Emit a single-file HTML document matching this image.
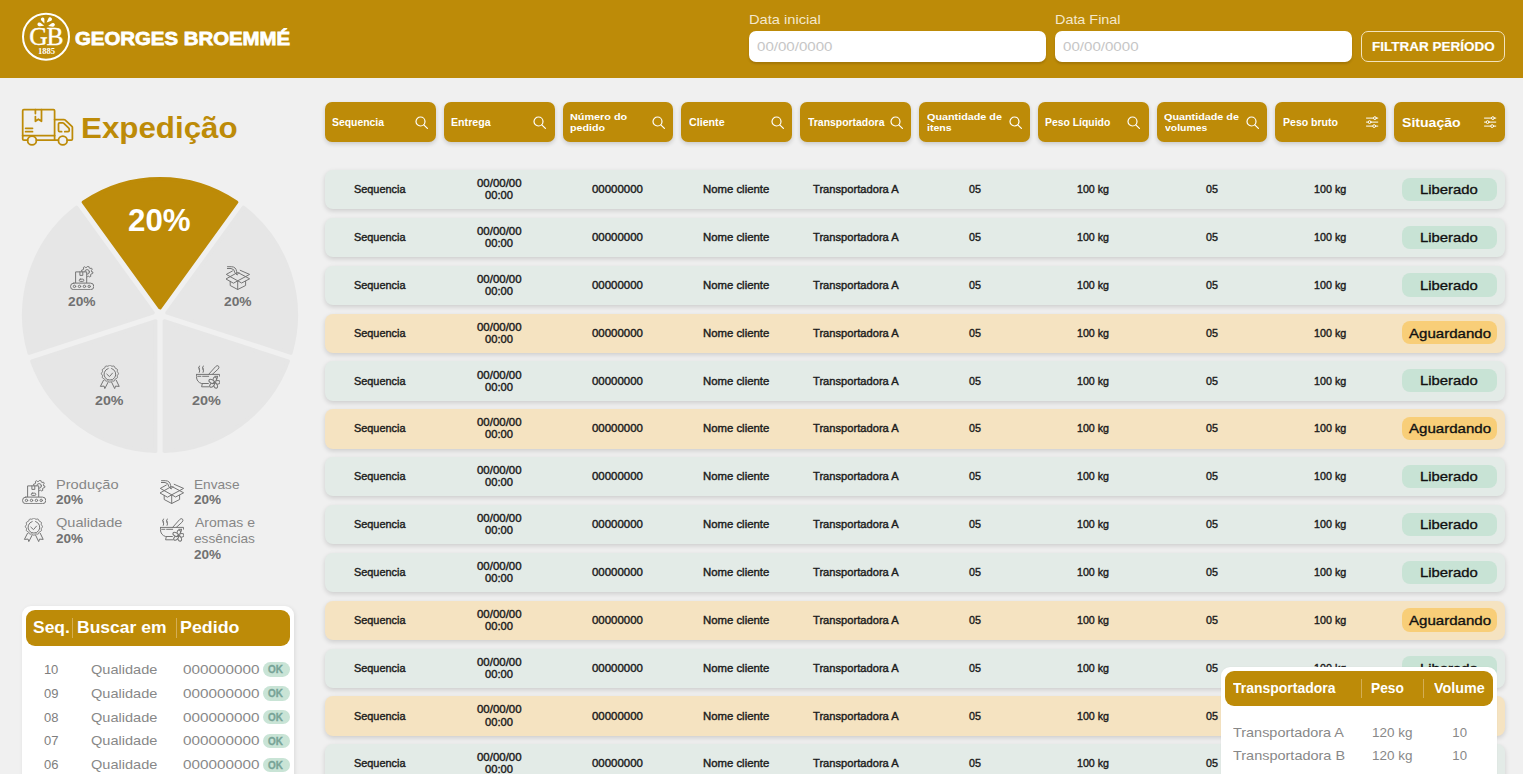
<!DOCTYPE html>
<html><head><meta charset="utf-8"><title>Expedição</title><style>
*{margin:0;padding:0}
html,body{width:1523px;height:774px;overflow:hidden;background:#F0F0F0;font-family:"Liberation Sans",sans-serif;position:relative}
.t{position:absolute;line-height:0;white-space:nowrap;transform-origin:0 0}
.r{position:absolute}
</style></head>
<body>
<div class="r" style="left:0px;top:0px;width:1523px;height:78px;background:#BD8B08;"></div>
<svg class="r" style="left:20px;top:11px" width="54" height="52" viewBox="0 0 54 52">
<circle cx="26" cy="25.7" r="23" fill="none" stroke="#fff" stroke-width="2"/>
<g fill="#fff">
<path d="M24.40 12.40 L21.40 9.57 A1.75 1.75 0 1 1 24.35 8.28 Z"/>
<path d="M26.60 11.40 L28.36 7.43 A1.9 1.9 0 1 1 30.71 10.00 Z"/>
<path d="M24.20 14.70 L19.47 15.14 A1.85 1.85 0 1 1 20.42 11.83 Z"/>
<path d="M28.10 15.10 L31.79 12.32 A1.85 1.85 0 1 1 32.68 15.64 Z"/>
</g>
<text x="25.7" y="33.9" text-anchor="middle" font-family="Liberation Serif" font-size="25.5" fill="#fff" stroke="#fff" stroke-width="0.35" letter-spacing="-1.2">GB</text>
<text x="26.5" y="43.2" text-anchor="middle" font-family="Liberation Serif" font-size="8.6" font-weight="700" fill="#fff">1885</text>
</svg>
<div class="t" style="left:74.87px;top:39.20px;font-size:19.2px;font-weight:700;color:#fff;transform:scaleX(1.0622);-webkit-text-stroke:0.8px #fff;">GEORGES BROEMMÉ</div>
<div class="t" style="left:748.89px;top:20.30px;font-size:13.5px;font-weight:400;color:#F4E8CC;transform:scaleX(1.0872);">Data inicial</div>
<div class="t" style="left:1054.91px;top:20.20px;font-size:13.5px;font-weight:400;color:#F4E8CC;transform:scaleX(1.0650);">Data Final</div>
<div class="r" style="left:749px;top:31px;width:297px;height:31px;background:#fff;border-radius:7px;box-shadow:0 2px 2px rgba(90,60,0,0.25);"></div>
<div class="t" style="left:756.71px;top:46.90px;font-size:12.7px;font-weight:400;color:#C6C6C6;transform:scaleX(1.1883);">00/00/0000</div>
<div class="r" style="left:1055px;top:31px;width:297px;height:31px;background:#fff;border-radius:7px;box-shadow:0 2px 2px rgba(90,60,0,0.25);"></div>
<div class="t" style="left:1063.11px;top:46.90px;font-size:12.7px;font-weight:400;color:#C6C6C6;transform:scaleX(1.1899);">00/00/0000</div>
<div class="r" style="left:1361.3px;top:31px;width:143.9px;height:31px;border:1px solid #F3E3BD;border-radius:7px;box-sizing:border-box;"></div>
<div class="t" style="left:1371.82px;top:47.20px;font-size:12.9px;font-weight:700;color:#fff;transform:scaleX(1.0462);-webkit-text-stroke:0.15px #fff;">FILTRAR PERÍODO</div>
<svg class="r" style="left:18px;top:105px" width="60" height="45" viewBox="0 0 60 45" fill="none" stroke="#BD8B08" stroke-width="1.75" stroke-linejoin="round" stroke-linecap="round">
<path d="M4.7 30.5 V5.8 Q4.7 4.7 5.8 4.7 H35.5 Q36.6 4.7 36.6 5.8 V35.2"/>
<path d="M17.4 4.7 V8.6 M17.4 11.6 V16.3 L20.4 14.2 L23.5 16.3 V4.7"/>
<path d="M7.6 23.3 H14.5 M7.6 26.7 H14.5"/>
<path d="M4.7 30.5 H36.6"/>
<path d="M4.7 30.5 V34 Q4.7 35.2 5.9 35.2 H9.6 M18.4 35.2 H40.4 M49.2 35.2 H53.3 Q54.4 35.2 54.4 34 V22.6 Q54.4 21.9 53.9 21.4 L47 14.9 Q46.6 14.6 46 14.6 H36.6"/>
<path d="M43.6 26.7 H41.6 Q40.5 26.7 40.5 25.6 V18.9 Q40.5 17.8 41.6 17.8 H44.6 Q45.2 17.8 45.6 18.2 L50.8 23.2 Q51.2 23.6 51.2 24.2 V25.6 Q51.2 26.7 50.1 26.7 H46.8"/>
<circle cx="14" cy="35.5" r="4.4"/><circle cx="44.8" cy="35.5" r="4.4"/>
</svg>
<div class="t" style="left:80.70px;top:127.80px;font-size:29px;font-weight:700;color:#BD8B08;transform:scaleX(1.0800);">Expedição</div>
<svg width="0" height="0" style="position:absolute">
<defs>
<symbol id="i-prod" viewBox="0 0 24 24" fill="none" stroke="currentColor" stroke-width="1.0" stroke-linejoin="round" stroke-linecap="round">
<path d="M22.87 6.47 L22.65 7.58 L21.07 8.02 L20.58 8.75 L20.78 10.38 L19.83 11.02 L18.41 10.21 L17.54 10.38 L16.53 11.67 L15.42 11.45 L14.98 9.87 L14.25 9.38 L12.62 9.58 L11.98 8.63 L12.79 7.21 L12.62 6.34 L11.33 5.33 L11.55 4.22 L13.13 3.78 L13.62 3.05 L13.42 1.42 L14.37 0.78 L15.79 1.59 L16.66 1.42 L17.67 0.13 L18.78 0.35 L19.22 1.93 L19.95 2.42 L21.58 2.22 L22.22 3.17 L21.41 4.59 L21.58 5.46 Z" style="fill:var(--ibg)"/>
<circle cx="17.1" cy="5.9" r="2.3"/>
<path d="M5.6 17.1 V5.9 H16.7 V17.1 Z" style="fill:var(--ibg)"/>
<path d="M9.9 5.9 V9.4 H12.8 V5.9"/>
<rect x="9.3" y="13.15" width="4.5" height="2.25" rx="1"/>
<rect x="0.5" y="17.1" width="23.3" height="6.6" rx="3.3" style="fill:var(--ibg)"/>
<circle cx="4.5" cy="20.4" r="1.2"/><circle cx="9.5" cy="20.4" r="1.2"/><circle cx="14.45" cy="20.4" r="1.2"/><circle cx="19.2" cy="20.4" r="1.2"/>
</symbol>
<symbol id="i-env" viewBox="0 0 24 24" fill="none" stroke="currentColor" stroke-width="1.0" stroke-linejoin="round" stroke-linecap="round">
<path d="M4.2 15.3 V19.5 L11.7 23.5 L19.6 19.5 V15.3"/>
<path d="M11.7 14.8 V23.5"/>
<path d="M0.3 12.8 L4.2 10.6 L11.7 14.8 L19.6 10.6 L23.6 12.8 L15.6 17 L11.7 14.8 L7.8 17 Z"/>
<path d="M4.2 10.6 L0.3 8.4 L6.4 5 M14.2 4.3 L23.6 8.4 L19.6 10.6"/>
<path d="M4.2 10.6 L11.7 6.4 L19.6 10.6"/>
<path d="M1.5 0.7 H5.6 Q10 0.9 10.6 5.5 L11 8.8 L12.9 6.7 M11 8.8 L9.1 7 M1.4 2.5 H5 Q8.4 2.7 8.9 6.4"/>
</symbol>
<symbol id="i-qual" viewBox="0 0 24 24" fill="none" stroke="currentColor" stroke-width="1.0" stroke-linejoin="round" stroke-linecap="round">
<path d="M5.45 15.4 L2.4 21.4 L6.1 21.1 L6.8 23.6 L10.1 17.2"/>
<path d="M18.3 15.4 L21.2 21.4 L17.5 21.1 L16.7 23.6 L13.6 17.2"/>
<path d="M11.90 0.05 L12.45 0.20 L12.96 0.57 L13.42 0.97 L13.88 1.21 L14.40 1.23 L15.00 1.12 L15.62 1.05 L16.17 1.20 L16.58 1.60 L16.83 2.17 L17.03 2.75 L17.31 3.19 L17.75 3.47 L18.33 3.67 L18.90 3.92 L19.30 4.32 L19.45 4.88 L19.38 5.50 L19.27 6.10 L19.29 6.62 L19.53 7.08 L19.93 7.54 L20.30 8.05 L20.45 8.60 L20.30 9.15 L19.93 9.66 L19.53 10.12 L19.29 10.58 L19.27 11.10 L19.38 11.70 L19.45 12.32 L19.30 12.87 L18.90 13.28 L18.33 13.53 L17.75 13.73 L17.31 14.01 L17.03 14.45 L16.83 15.03 L16.58 15.60 L16.17 16.00 L15.62 16.15 L15.00 16.08 L14.40 15.97 L13.88 15.99 L13.42 16.23 L12.96 16.63 L12.45 17.00 L11.90 17.15 L11.35 17.00 L10.84 16.63 L10.38 16.23 L9.92 15.99 L9.40 15.97 L8.80 16.08 L8.18 16.15 L7.63 16.00 L7.22 15.60 L6.97 15.03 L6.77 14.45 L6.49 14.01 L6.05 13.73 L5.47 13.53 L4.90 13.28 L4.50 12.88 L4.35 12.32 L4.42 11.70 L4.53 11.10 L4.51 10.58 L4.27 10.12 L3.87 9.66 L3.50 9.15 L3.35 8.60 L3.50 8.05 L3.87 7.54 L4.27 7.08 L4.51 6.62 L4.53 6.10 L4.42 5.50 L4.35 4.88 L4.50 4.32 L4.90 3.92 L5.47 3.67 L6.05 3.47 L6.49 3.19 L6.77 2.75 L6.97 2.17 L7.22 1.60 L7.62 1.20 L8.18 1.05 L8.80 1.12 L9.40 1.23 L9.92 1.21 L10.38 0.97 L10.84 0.57 L11.35 0.20 Z" style="fill:var(--ibg)"/>
<path d="M10.2 3.5 A5.9 5.9 0 1 0 13.6 3.5"/>
<path d="M8.8 9.1 L11.5 11.6 L14.5 8.1"/>
</symbol>
<symbol id="i-aro" viewBox="0 0 24 24" fill="none" stroke="currentColor" stroke-width="1.0" stroke-linejoin="round" stroke-linecap="round">
<path d="M12.6 9.4 L19.5 1.7 Q21.2 -0.3 22.6 1.2 Q23.6 2.7 21.9 4.3 L16.3 9.4"/>
<path d="M0.4 9.4 H23.6 V11.2 M0.4 9.4 V11.5 Q0.7 17.2 5.6 18.5 H12.4"/>
<path d="M1.7 11.3 H4.9 M6.6 11.3 H12.7 M18.8 11.3 H21.5 M21.6 11.3 Q21.4 13.8 20.5 15"/>
<path d="M6.3 18.6 L5.6 21.8 H13"/>
<path d="M3.4 1 Q2.2 2.7 3.4 4.6 Q4.1 5.8 3.3 7.4 M7.2 1 Q6 2.7 7.2 4.6 Q7.9 5.8 7.1 7.4 M2.6 2.6 Q4 3.3 3.4 4.6 M6.4 2.6 Q7.8 3.3 7.2 4.6"/>
<g style="fill:var(--ibg)"><ellipse cx="18.70" cy="14.94" rx="1.75" ry="2.9" transform="rotate(10 18.70 14.94)"/><ellipse cx="21.07" cy="17.40" rx="1.75" ry="2.9" transform="rotate(82 21.07 17.40)"/><ellipse cx="19.47" cy="20.41" rx="1.75" ry="2.9" transform="rotate(154 19.47 20.41)"/><ellipse cx="16.11" cy="19.81" rx="1.75" ry="2.9" transform="rotate(226 16.11 19.81)"/><ellipse cx="15.64" cy="16.44" rx="1.75" ry="2.9" transform="rotate(298 15.64 16.44)"/></g>
<circle cx="18.2" cy="17.8" r="0.9"/>
</symbol>
</defs></svg>
<svg class="r" style="left:0;top:0" width="330" height="470" viewBox="0 0 330 470">
<path d="M160.00 307.60 L83.50 202.31 A136.20 136.20 0 0 1 236.50 202.31 Z" fill="#BD8B08" stroke="#BD8B08" stroke-width="3.6" stroke-linejoin="round"/>
<path d="M167.04 312.71 L243.53 207.42 A136.20 136.20 0 0 1 290.81 352.93 Z" fill="#E6E6E6" stroke="#E6E6E6" stroke-width="3.6" stroke-linejoin="round"/>
<path d="M164.35 320.99 L288.12 361.20 A136.20 136.20 0 0 1 164.35 451.13 Z" fill="#E6E6E6" stroke="#E6E6E6" stroke-width="3.6" stroke-linejoin="round"/>
<path d="M155.65 320.99 L155.65 451.13 A136.20 136.20 0 0 1 31.88 361.20 Z" fill="#E6E6E6" stroke="#E6E6E6" stroke-width="3.6" stroke-linejoin="round"/>
<path d="M152.96 312.71 L29.19 352.93 A136.20 136.20 0 0 1 76.47 207.42 Z" fill="#E6E6E6" stroke="#E6E6E6" stroke-width="3.6" stroke-linejoin="round"/>
</svg>
<div class="t" style="left:128.46px;top:220.00px;font-size:30.5px;font-weight:700;color:#fff;transform:scaleX(1.0256);">20%</div>
<svg class="r" style="left:69.8px;top:266px;color:#757575;--ibg:#E6E6E6" width="24" height="24" viewBox="0 0 24 24"><use href="#i-prod"/></svg>
<div class="t" style="left:67.79px;top:302.30px;font-size:13.5px;font-weight:700;color:#717171;transform:scaleX(1.0212);">20%</div>
<svg class="r" style="left:226px;top:266px;color:#757575;--ibg:#E6E6E6" width="24" height="24" viewBox="0 0 24 24"><use href="#i-env"/></svg>
<div class="t" style="left:223.79px;top:302.30px;font-size:13.5px;font-weight:700;color:#717171;transform:scaleX(1.0212);">20%</div>
<svg class="r" style="left:98px;top:364.5px;color:#757575;--ibg:#E6E6E6" width="24" height="24" viewBox="0 0 24 24"><use href="#i-qual"/></svg>
<div class="t" style="left:95.17px;top:401.00px;font-size:13.5px;font-weight:700;color:#717171;transform:scaleX(1.0556);">20%</div>
<svg class="r" style="left:195.5px;top:364.5px;color:#757575;--ibg:#E6E6E6" width="24" height="24" viewBox="0 0 24 24"><use href="#i-aro"/></svg>
<div class="t" style="left:192.47px;top:401.00px;font-size:13.5px;font-weight:700;color:#717171;transform:scaleX(1.0709);">20%</div>
<svg class="r" style="left:22px;top:480px;color:#757575;--ibg:#F0F0F0" width="24" height="24" viewBox="0 0 24 24"><use href="#i-prod"/></svg>
<div class="t" style="left:55.68px;top:485.00px;font-size:13.1px;font-weight:400;color:#878787;transform:scaleX(1.1168);">Produção</div>
<div class="t" style="left:56.19px;top:500.00px;font-size:13.3px;font-weight:700;color:#717171;transform:scaleX(1.0195);">20%</div>
<svg class="r" style="left:160px;top:480px;color:#757575;--ibg:#F0F0F0" width="24" height="24" viewBox="0 0 24 24"><use href="#i-env"/></svg>
<div class="t" style="left:193.85px;top:485.00px;font-size:13.1px;font-weight:400;color:#878787;transform:scaleX(1.0429);">Envase</div>
<div class="t" style="left:194.29px;top:500.00px;font-size:13.3px;font-weight:700;color:#717171;transform:scaleX(1.0195);">20%</div>
<svg class="r" style="left:22px;top:518px;color:#757575;--ibg:#F0F0F0" width="24" height="24" viewBox="0 0 24 24"><use href="#i-qual"/></svg>
<div class="t" style="left:55.96px;top:523.20px;font-size:13.1px;font-weight:400;color:#878787;transform:scaleX(1.1120);">Qualidade</div>
<div class="t" style="left:56.19px;top:539.00px;font-size:13.3px;font-weight:700;color:#717171;transform:scaleX(1.0195);">20%</div>
<svg class="r" style="left:160px;top:518px;color:#757575;--ibg:#F0F0F0" width="24" height="24" viewBox="0 0 24 24"><use href="#i-aro"/></svg>
<div class="t" style="left:194.84px;top:523.20px;font-size:13.1px;font-weight:400;color:#878787;transform:scaleX(1.0713);">Aromas e</div>
<div class="t" style="left:194.14px;top:539.00px;font-size:13.1px;font-weight:400;color:#878787;transform:scaleX(1.0463);">essências</div>
<div class="t" style="left:194.29px;top:554.80px;font-size:13.3px;font-weight:700;color:#717171;transform:scaleX(1.0195);">20%</div>
<div class="r" style="left:22px;top:606px;width:272px;height:200px;background:#fff;border-radius:9px;box-shadow:1px 1px 4px rgba(0,0,0,0.09);"></div>
<div class="r" style="left:26px;top:610px;width:264px;height:35.5px;background:#BD8B08;border-radius:9px;"></div>
<div class="r" style="left:72.2px;top:618px;width:1px;height:19.5px;background:#D4AE55;"></div>
<div class="r" style="left:176px;top:618px;width:1px;height:19.5px;background:#D4AE55;"></div>
<div class="t" style="left:33.24px;top:627.30px;font-size:16.5px;font-weight:700;color:#fff;transform:scaleX(1.0589);">Seq.</div>
<div class="t" style="left:76.81px;top:627.30px;font-size:16.5px;font-weight:700;color:#fff;transform:scaleX(1.0613);">Buscar em</div>
<div class="t" style="left:180.19px;top:627.30px;font-size:16.5px;font-weight:700;color:#fff;transform:scaleX(1.0809);">Pedido</div>
<div class="t" style="left:43.88px;top:669.70px;font-size:13px;font-weight:400;color:#7E7E7E;">10</div>
<div class="t" style="left:91.36px;top:669.70px;font-size:13px;font-weight:400;color:#888888;transform:scaleX(1.1188);">Qualidade</div>
<div class="t" style="left:183.32px;top:669.70px;font-size:13px;font-weight:400;color:#888888;transform:scaleX(1.1748);">000000000</div>
<div class="r" style="left:263px;top:661.9px;width:26.6px;height:14.8px;background:#C9E4D6;border-radius:7.4px;"></div>
<div class="t" style="left:268.35px;top:670.10px;font-size:10.3px;font-weight:700;color:#77A396;transform:scaleX(0.9628);-webkit-text-stroke:0.3px #77A396;">OK</div>
<div class="t" style="left:44.06px;top:693.60px;font-size:13px;font-weight:400;color:#7E7E7E;">09</div>
<div class="t" style="left:91.36px;top:693.60px;font-size:13px;font-weight:400;color:#888888;transform:scaleX(1.1188);">Qualidade</div>
<div class="t" style="left:183.32px;top:693.60px;font-size:13px;font-weight:400;color:#888888;transform:scaleX(1.1748);">000000000</div>
<div class="r" style="left:263px;top:685.8px;width:26.6px;height:14.8px;background:#C9E4D6;border-radius:7.4px;"></div>
<div class="t" style="left:268.35px;top:694.00px;font-size:10.3px;font-weight:700;color:#77A396;transform:scaleX(0.9628);-webkit-text-stroke:0.3px #77A396;">OK</div>
<div class="t" style="left:44.05px;top:717.50px;font-size:13px;font-weight:400;color:#7E7E7E;">08</div>
<div class="t" style="left:91.36px;top:717.50px;font-size:13px;font-weight:400;color:#888888;transform:scaleX(1.1188);">Qualidade</div>
<div class="t" style="left:183.32px;top:717.50px;font-size:13px;font-weight:400;color:#888888;transform:scaleX(1.1748);">000000000</div>
<div class="r" style="left:263px;top:709.7px;width:26.6px;height:14.8px;background:#C9E4D6;border-radius:7.4px;"></div>
<div class="t" style="left:268.35px;top:717.90px;font-size:10.3px;font-weight:700;color:#77A396;transform:scaleX(0.9628);-webkit-text-stroke:0.3px #77A396;">OK</div>
<div class="t" style="left:44.06px;top:741.40px;font-size:13px;font-weight:400;color:#7E7E7E;">07</div>
<div class="t" style="left:91.36px;top:741.40px;font-size:13px;font-weight:400;color:#888888;transform:scaleX(1.1188);">Qualidade</div>
<div class="t" style="left:183.32px;top:741.40px;font-size:13px;font-weight:400;color:#888888;transform:scaleX(1.1748);">000000000</div>
<div class="r" style="left:263px;top:733.6px;width:26.6px;height:14.8px;background:#C9E4D6;border-radius:7.4px;"></div>
<div class="t" style="left:268.35px;top:741.80px;font-size:10.3px;font-weight:700;color:#77A396;transform:scaleX(0.9628);-webkit-text-stroke:0.3px #77A396;">OK</div>
<div class="t" style="left:44.06px;top:765.30px;font-size:13px;font-weight:400;color:#7E7E7E;">06</div>
<div class="t" style="left:91.36px;top:765.30px;font-size:13px;font-weight:400;color:#888888;transform:scaleX(1.1188);">Qualidade</div>
<div class="t" style="left:183.32px;top:765.30px;font-size:13px;font-weight:400;color:#888888;transform:scaleX(1.1748);">000000000</div>
<div class="r" style="left:263px;top:757.5px;width:26.6px;height:14.8px;background:#C9E4D6;border-radius:7.4px;"></div>
<div class="t" style="left:268.35px;top:765.70px;font-size:10.3px;font-weight:700;color:#77A396;transform:scaleX(0.9628);-webkit-text-stroke:0.3px #77A396;">OK</div>
<div class="r" style="left:325.0px;top:102px;width:110.8px;height:40px;background:#BD8B08;border-radius:7px;box-shadow:0 2px 4px rgba(0,0,0,0.16);"></div>
<div class="t" style="left:332.49px;top:122.30px;font-size:10.9px;font-weight:700;color:#fff;transform:scaleX(0.9542);">Sequencia</div>
<svg class="r" style="left:414.5px;top:115.6px" width="14" height="14" viewBox="0 0 14 14" fill="none" stroke="#fff" stroke-width="1.2" stroke-linecap="round"><circle cx="5.5" cy="5.5" r="4.5"/><path d="M8.8 8.8 L12.4 12.4"/></svg>
<div class="r" style="left:443.8px;top:102px;width:110.8px;height:40px;background:#BD8B08;border-radius:7px;box-shadow:0 2px 4px rgba(0,0,0,0.16);"></div>
<div class="t" style="left:451.18px;top:122.30px;font-size:10.9px;font-weight:700;color:#fff;transform:scaleX(0.9778);">Entrega</div>
<svg class="r" style="left:533.3px;top:115.6px" width="14" height="14" viewBox="0 0 14 14" fill="none" stroke="#fff" stroke-width="1.2" stroke-linecap="round"><circle cx="5.5" cy="5.5" r="4.5"/><path d="M8.8 8.8 L12.4 12.4"/></svg>
<div class="r" style="left:562.6px;top:102px;width:110.8px;height:40px;background:#BD8B08;border-radius:7px;box-shadow:0 2px 4px rgba(0,0,0,0.16);"></div>
<div class="t" style="left:570.26px;top:116.60px;font-size:9.6px;font-weight:700;color:#fff;transform:scaleX(1.1276);">Número do</div>
<div class="t" style="left:570.26px;top:128.40px;font-size:9.6px;font-weight:700;color:#fff;transform:scaleX(1.1123);">pedido</div>
<svg class="r" style="left:652.1px;top:115.6px" width="14" height="14" viewBox="0 0 14 14" fill="none" stroke="#fff" stroke-width="1.2" stroke-linecap="round"><circle cx="5.5" cy="5.5" r="4.5"/><path d="M8.8 8.8 L12.4 12.4"/></svg>
<div class="r" style="left:681.4px;top:102px;width:110.8px;height:40px;background:#BD8B08;border-radius:7px;box-shadow:0 2px 4px rgba(0,0,0,0.16);"></div>
<div class="t" style="left:689.00px;top:122.30px;font-size:10.9px;font-weight:700;color:#fff;transform:scaleX(0.9801);">Cliente</div>
<svg class="r" style="left:770.9px;top:115.6px" width="14" height="14" viewBox="0 0 14 14" fill="none" stroke="#fff" stroke-width="1.2" stroke-linecap="round"><circle cx="5.5" cy="5.5" r="4.5"/><path d="M8.8 8.8 L12.4 12.4"/></svg>
<div class="r" style="left:800.2px;top:102px;width:110.8px;height:40px;background:#BD8B08;border-radius:7px;box-shadow:0 2px 4px rgba(0,0,0,0.16);"></div>
<div class="t" style="left:808.46px;top:122.30px;font-size:10.9px;font-weight:700;color:#fff;transform:scaleX(0.9567);">Transportadora</div>
<svg class="r" style="left:889.7px;top:115.6px" width="14" height="14" viewBox="0 0 14 14" fill="none" stroke="#fff" stroke-width="1.2" stroke-linecap="round"><circle cx="5.5" cy="5.5" r="4.5"/><path d="M8.8 8.8 L12.4 12.4"/></svg>
<div class="r" style="left:919.0px;top:102px;width:110.8px;height:40px;background:#BD8B08;border-radius:7px;box-shadow:0 2px 4px rgba(0,0,0,0.16);"></div>
<div class="t" style="left:926.86px;top:116.60px;font-size:9.6px;font-weight:700;color:#fff;transform:scaleX(1.1239);">Quantidade de</div>
<div class="t" style="left:926.65px;top:128.40px;font-size:9.6px;font-weight:700;color:#fff;transform:scaleX(1.1012);">itens</div>
<svg class="r" style="left:1008.5px;top:115.6px" width="14" height="14" viewBox="0 0 14 14" fill="none" stroke="#fff" stroke-width="1.2" stroke-linecap="round"><circle cx="5.5" cy="5.5" r="4.5"/><path d="M8.8 8.8 L12.4 12.4"/></svg>
<div class="r" style="left:1037.8px;top:102px;width:110.8px;height:40px;background:#BD8B08;border-radius:7px;box-shadow:0 2px 4px rgba(0,0,0,0.16);"></div>
<div class="t" style="left:1045.30px;top:122.30px;font-size:10.9px;font-weight:700;color:#fff;transform:scaleX(0.9542);">Peso Líquido</div>
<svg class="r" style="left:1127.3px;top:115.6px" width="14" height="14" viewBox="0 0 14 14" fill="none" stroke="#fff" stroke-width="1.2" stroke-linecap="round"><circle cx="5.5" cy="5.5" r="4.5"/><path d="M8.8 8.8 L12.4 12.4"/></svg>
<div class="r" style="left:1156.6px;top:102px;width:110.8px;height:40px;background:#BD8B08;border-radius:7px;box-shadow:0 2px 4px rgba(0,0,0,0.16);"></div>
<div class="t" style="left:1164.46px;top:116.60px;font-size:9.6px;font-weight:700;color:#fff;transform:scaleX(1.1239);">Quantidade de</div>
<div class="t" style="left:1165.04px;top:128.40px;font-size:9.6px;font-weight:700;color:#fff;transform:scaleX(1.0853);">volumes</div>
<svg class="r" style="left:1246.1px;top:115.6px" width="14" height="14" viewBox="0 0 14 14" fill="none" stroke="#fff" stroke-width="1.2" stroke-linecap="round"><circle cx="5.5" cy="5.5" r="4.5"/><path d="M8.8 8.8 L12.4 12.4"/></svg>
<div class="r" style="left:1275.4px;top:102px;width:110.8px;height:40px;background:#BD8B08;border-radius:7px;box-shadow:0 2px 4px rgba(0,0,0,0.16);"></div>
<div class="t" style="left:1282.99px;top:122.30px;font-size:10.9px;font-weight:700;color:#fff;transform:scaleX(0.9668);">Peso bruto</div>
<svg class="r" style="left:1365.6000000000001px;top:116.2px" width="14" height="14" viewBox="0 0 14 14" fill="none" stroke="#fff" stroke-width="1" stroke-linecap="round"><path d="M0.5 2.1 H11.8 M0.5 6.1 H11.8 M0.5 10.1 H11.8"/><circle cx="8.9" cy="2.1" r="1.4" fill="#BD8B08"/><circle cx="3.6" cy="6.1" r="1.4" fill="#BD8B08"/><circle cx="8.2" cy="10.1" r="1.4" fill="#BD8B08"/></svg>
<div class="r" style="left:1394.2px;top:102px;width:110.8px;height:40px;background:#BD8B08;border-radius:7px;box-shadow:0 2px 4px rgba(0,0,0,0.16);"></div>
<div class="t" style="left:1401.62px;top:123.20px;font-size:13.7px;font-weight:700;color:#fff;transform:scaleX(1.0273);">Situação</div>
<svg class="r" style="left:1484.4px;top:116.2px" width="14" height="14" viewBox="0 0 14 14" fill="none" stroke="#fff" stroke-width="1" stroke-linecap="round"><path d="M0.5 2.1 H11.8 M0.5 6.1 H11.8 M0.5 10.1 H11.8"/><circle cx="8.9" cy="2.1" r="1.4" fill="#BD8B08"/><circle cx="3.6" cy="6.1" r="1.4" fill="#BD8B08"/><circle cx="8.2" cy="10.1" r="1.4" fill="#BD8B08"/></svg>
<div class="r" style="left:325px;top:170.0px;width:1180px;height:39.3px;background:#E3EBE7;border-radius:8px;box-shadow:0 2px 5px rgba(0,0,0,0.15);"></div>
<div class="t" style="left:354.23px;top:189.20px;font-size:10.8px;font-weight:400;color:#1C1C1C;transform:scaleX(1.0084);-webkit-text-stroke:0.4px #1C1C1C;">Sequencia</div>
<div class="t" style="left:476.64px;top:183.10px;font-size:10.8px;font-weight:400;color:#1C1C1C;transform:scaleX(1.0615);-webkit-text-stroke:0.4px #1C1C1C;">00/00/00</div>
<div class="t" style="left:485.04px;top:195.20px;font-size:10.8px;font-weight:400;color:#1C1C1C;transform:scaleX(1.0328);-webkit-text-stroke:0.4px #1C1C1C;">00:00</div>
<div class="t" style="left:592.34px;top:189.20px;font-size:10.8px;font-weight:400;color:#1C1C1C;transform:scaleX(1.0601);-webkit-text-stroke:0.4px #1C1C1C;">00000000</div>
<div class="t" style="left:703.31px;top:189.20px;font-size:10.8px;font-weight:400;color:#1C1C1C;transform:scaleX(1.0514);-webkit-text-stroke:0.4px #1C1C1C;">Nome cliente</div>
<div class="t" style="left:812.59px;top:189.20px;font-size:10.8px;font-weight:400;color:#1C1C1C;transform:scaleX(1.0327);-webkit-text-stroke:0.4px #1C1C1C;">Transportadora A</div>
<div class="t" style="left:968.54px;top:189.20px;font-size:10.8px;font-weight:400;color:#1C1C1C;transform:scaleX(0.9916);-webkit-text-stroke:0.4px #1C1C1C;">05</div>
<div class="t" style="left:1076.60px;top:189.20px;font-size:10.8px;font-weight:400;color:#1C1C1C;transform:scaleX(0.9876);-webkit-text-stroke:0.4px #1C1C1C;">100 kg</div>
<div class="t" style="left:1206.14px;top:189.20px;font-size:10.8px;font-weight:400;color:#1C1C1C;transform:scaleX(0.9916);-webkit-text-stroke:0.4px #1C1C1C;">05</div>
<div class="t" style="left:1314.40px;top:189.20px;font-size:10.8px;font-weight:400;color:#1C1C1C;transform:scaleX(0.9939);-webkit-text-stroke:0.4px #1C1C1C;">100 kg</div>
<div class="r" style="left:1402.3px;top:177.7px;width:94.7px;height:23.2px;background:#C8E3D5;border-radius:8px;"></div>
<div class="t" style="left:1420.48px;top:190.00px;font-size:13.5px;font-weight:400;color:#111;transform:scaleX(1.1007);-webkit-text-stroke:0.35px #111;">Liberado</div>
<div class="r" style="left:325px;top:217.85px;width:1180px;height:39.3px;background:#E3EBE7;border-radius:8px;box-shadow:0 2px 5px rgba(0,0,0,0.15);"></div>
<div class="t" style="left:354.23px;top:237.05px;font-size:10.8px;font-weight:400;color:#1C1C1C;transform:scaleX(1.0084);-webkit-text-stroke:0.4px #1C1C1C;">Sequencia</div>
<div class="t" style="left:476.64px;top:230.95px;font-size:10.8px;font-weight:400;color:#1C1C1C;transform:scaleX(1.0615);-webkit-text-stroke:0.4px #1C1C1C;">00/00/00</div>
<div class="t" style="left:485.04px;top:243.05px;font-size:10.8px;font-weight:400;color:#1C1C1C;transform:scaleX(1.0328);-webkit-text-stroke:0.4px #1C1C1C;">00:00</div>
<div class="t" style="left:592.34px;top:237.05px;font-size:10.8px;font-weight:400;color:#1C1C1C;transform:scaleX(1.0601);-webkit-text-stroke:0.4px #1C1C1C;">00000000</div>
<div class="t" style="left:703.31px;top:237.05px;font-size:10.8px;font-weight:400;color:#1C1C1C;transform:scaleX(1.0514);-webkit-text-stroke:0.4px #1C1C1C;">Nome cliente</div>
<div class="t" style="left:812.59px;top:237.05px;font-size:10.8px;font-weight:400;color:#1C1C1C;transform:scaleX(1.0327);-webkit-text-stroke:0.4px #1C1C1C;">Transportadora A</div>
<div class="t" style="left:968.54px;top:237.05px;font-size:10.8px;font-weight:400;color:#1C1C1C;transform:scaleX(0.9916);-webkit-text-stroke:0.4px #1C1C1C;">05</div>
<div class="t" style="left:1076.60px;top:237.05px;font-size:10.8px;font-weight:400;color:#1C1C1C;transform:scaleX(0.9876);-webkit-text-stroke:0.4px #1C1C1C;">100 kg</div>
<div class="t" style="left:1206.14px;top:237.05px;font-size:10.8px;font-weight:400;color:#1C1C1C;transform:scaleX(0.9916);-webkit-text-stroke:0.4px #1C1C1C;">05</div>
<div class="t" style="left:1314.40px;top:237.05px;font-size:10.8px;font-weight:400;color:#1C1C1C;transform:scaleX(0.9939);-webkit-text-stroke:0.4px #1C1C1C;">100 kg</div>
<div class="r" style="left:1402.3px;top:225.55px;width:94.7px;height:23.2px;background:#C8E3D5;border-radius:8px;"></div>
<div class="t" style="left:1420.48px;top:237.85px;font-size:13.5px;font-weight:400;color:#111;transform:scaleX(1.1007);-webkit-text-stroke:0.35px #111;">Liberado</div>
<div class="r" style="left:325px;top:265.7px;width:1180px;height:39.3px;background:#E3EBE7;border-radius:8px;box-shadow:0 2px 5px rgba(0,0,0,0.15);"></div>
<div class="t" style="left:354.23px;top:284.90px;font-size:10.8px;font-weight:400;color:#1C1C1C;transform:scaleX(1.0084);-webkit-text-stroke:0.4px #1C1C1C;">Sequencia</div>
<div class="t" style="left:476.64px;top:278.80px;font-size:10.8px;font-weight:400;color:#1C1C1C;transform:scaleX(1.0615);-webkit-text-stroke:0.4px #1C1C1C;">00/00/00</div>
<div class="t" style="left:485.04px;top:290.90px;font-size:10.8px;font-weight:400;color:#1C1C1C;transform:scaleX(1.0328);-webkit-text-stroke:0.4px #1C1C1C;">00:00</div>
<div class="t" style="left:592.34px;top:284.90px;font-size:10.8px;font-weight:400;color:#1C1C1C;transform:scaleX(1.0601);-webkit-text-stroke:0.4px #1C1C1C;">00000000</div>
<div class="t" style="left:703.31px;top:284.90px;font-size:10.8px;font-weight:400;color:#1C1C1C;transform:scaleX(1.0514);-webkit-text-stroke:0.4px #1C1C1C;">Nome cliente</div>
<div class="t" style="left:812.59px;top:284.90px;font-size:10.8px;font-weight:400;color:#1C1C1C;transform:scaleX(1.0327);-webkit-text-stroke:0.4px #1C1C1C;">Transportadora A</div>
<div class="t" style="left:968.54px;top:284.90px;font-size:10.8px;font-weight:400;color:#1C1C1C;transform:scaleX(0.9916);-webkit-text-stroke:0.4px #1C1C1C;">05</div>
<div class="t" style="left:1076.60px;top:284.90px;font-size:10.8px;font-weight:400;color:#1C1C1C;transform:scaleX(0.9876);-webkit-text-stroke:0.4px #1C1C1C;">100 kg</div>
<div class="t" style="left:1206.14px;top:284.90px;font-size:10.8px;font-weight:400;color:#1C1C1C;transform:scaleX(0.9916);-webkit-text-stroke:0.4px #1C1C1C;">05</div>
<div class="t" style="left:1314.40px;top:284.90px;font-size:10.8px;font-weight:400;color:#1C1C1C;transform:scaleX(0.9939);-webkit-text-stroke:0.4px #1C1C1C;">100 kg</div>
<div class="r" style="left:1402.3px;top:273.4px;width:94.7px;height:23.2px;background:#C8E3D5;border-radius:8px;"></div>
<div class="t" style="left:1420.48px;top:285.70px;font-size:13.5px;font-weight:400;color:#111;transform:scaleX(1.1007);-webkit-text-stroke:0.35px #111;">Liberado</div>
<div class="r" style="left:325px;top:313.55px;width:1180px;height:39.3px;background:#F5E3C1;border-radius:8px;box-shadow:0 2px 5px rgba(0,0,0,0.15);"></div>
<div class="t" style="left:354.23px;top:332.75px;font-size:10.8px;font-weight:400;color:#1C1C1C;transform:scaleX(1.0084);-webkit-text-stroke:0.4px #1C1C1C;">Sequencia</div>
<div class="t" style="left:476.64px;top:326.65px;font-size:10.8px;font-weight:400;color:#1C1C1C;transform:scaleX(1.0615);-webkit-text-stroke:0.4px #1C1C1C;">00/00/00</div>
<div class="t" style="left:485.04px;top:338.75px;font-size:10.8px;font-weight:400;color:#1C1C1C;transform:scaleX(1.0328);-webkit-text-stroke:0.4px #1C1C1C;">00:00</div>
<div class="t" style="left:592.34px;top:332.75px;font-size:10.8px;font-weight:400;color:#1C1C1C;transform:scaleX(1.0601);-webkit-text-stroke:0.4px #1C1C1C;">00000000</div>
<div class="t" style="left:703.31px;top:332.75px;font-size:10.8px;font-weight:400;color:#1C1C1C;transform:scaleX(1.0514);-webkit-text-stroke:0.4px #1C1C1C;">Nome cliente</div>
<div class="t" style="left:812.59px;top:332.75px;font-size:10.8px;font-weight:400;color:#1C1C1C;transform:scaleX(1.0327);-webkit-text-stroke:0.4px #1C1C1C;">Transportadora A</div>
<div class="t" style="left:968.54px;top:332.75px;font-size:10.8px;font-weight:400;color:#1C1C1C;transform:scaleX(0.9916);-webkit-text-stroke:0.4px #1C1C1C;">05</div>
<div class="t" style="left:1076.60px;top:332.75px;font-size:10.8px;font-weight:400;color:#1C1C1C;transform:scaleX(0.9876);-webkit-text-stroke:0.4px #1C1C1C;">100 kg</div>
<div class="t" style="left:1206.14px;top:332.75px;font-size:10.8px;font-weight:400;color:#1C1C1C;transform:scaleX(0.9916);-webkit-text-stroke:0.4px #1C1C1C;">05</div>
<div class="t" style="left:1314.40px;top:332.75px;font-size:10.8px;font-weight:400;color:#1C1C1C;transform:scaleX(0.9939);-webkit-text-stroke:0.4px #1C1C1C;">100 kg</div>
<div class="r" style="left:1402.3px;top:321.25px;width:94.7px;height:23.2px;background:#F8CE78;border-radius:8px;"></div>
<div class="t" style="left:1408.72px;top:333.55px;font-size:13.5px;font-weight:400;color:#111;transform:scaleX(1.1163);-webkit-text-stroke:0.35px #111;">Aguardando</div>
<div class="r" style="left:325px;top:361.4px;width:1180px;height:39.3px;background:#E3EBE7;border-radius:8px;box-shadow:0 2px 5px rgba(0,0,0,0.15);"></div>
<div class="t" style="left:354.23px;top:380.60px;font-size:10.8px;font-weight:400;color:#1C1C1C;transform:scaleX(1.0084);-webkit-text-stroke:0.4px #1C1C1C;">Sequencia</div>
<div class="t" style="left:476.64px;top:374.50px;font-size:10.8px;font-weight:400;color:#1C1C1C;transform:scaleX(1.0615);-webkit-text-stroke:0.4px #1C1C1C;">00/00/00</div>
<div class="t" style="left:485.04px;top:386.60px;font-size:10.8px;font-weight:400;color:#1C1C1C;transform:scaleX(1.0328);-webkit-text-stroke:0.4px #1C1C1C;">00:00</div>
<div class="t" style="left:592.34px;top:380.60px;font-size:10.8px;font-weight:400;color:#1C1C1C;transform:scaleX(1.0601);-webkit-text-stroke:0.4px #1C1C1C;">00000000</div>
<div class="t" style="left:703.31px;top:380.60px;font-size:10.8px;font-weight:400;color:#1C1C1C;transform:scaleX(1.0514);-webkit-text-stroke:0.4px #1C1C1C;">Nome cliente</div>
<div class="t" style="left:812.59px;top:380.60px;font-size:10.8px;font-weight:400;color:#1C1C1C;transform:scaleX(1.0327);-webkit-text-stroke:0.4px #1C1C1C;">Transportadora A</div>
<div class="t" style="left:968.54px;top:380.60px;font-size:10.8px;font-weight:400;color:#1C1C1C;transform:scaleX(0.9916);-webkit-text-stroke:0.4px #1C1C1C;">05</div>
<div class="t" style="left:1076.60px;top:380.60px;font-size:10.8px;font-weight:400;color:#1C1C1C;transform:scaleX(0.9876);-webkit-text-stroke:0.4px #1C1C1C;">100 kg</div>
<div class="t" style="left:1206.14px;top:380.60px;font-size:10.8px;font-weight:400;color:#1C1C1C;transform:scaleX(0.9916);-webkit-text-stroke:0.4px #1C1C1C;">05</div>
<div class="t" style="left:1314.40px;top:380.60px;font-size:10.8px;font-weight:400;color:#1C1C1C;transform:scaleX(0.9939);-webkit-text-stroke:0.4px #1C1C1C;">100 kg</div>
<div class="r" style="left:1402.3px;top:369.1px;width:94.7px;height:23.2px;background:#C8E3D5;border-radius:8px;"></div>
<div class="t" style="left:1420.48px;top:381.40px;font-size:13.5px;font-weight:400;color:#111;transform:scaleX(1.1007);-webkit-text-stroke:0.35px #111;">Liberado</div>
<div class="r" style="left:325px;top:409.25px;width:1180px;height:39.3px;background:#F5E3C1;border-radius:8px;box-shadow:0 2px 5px rgba(0,0,0,0.15);"></div>
<div class="t" style="left:354.23px;top:428.45px;font-size:10.8px;font-weight:400;color:#1C1C1C;transform:scaleX(1.0084);-webkit-text-stroke:0.4px #1C1C1C;">Sequencia</div>
<div class="t" style="left:476.64px;top:422.35px;font-size:10.8px;font-weight:400;color:#1C1C1C;transform:scaleX(1.0615);-webkit-text-stroke:0.4px #1C1C1C;">00/00/00</div>
<div class="t" style="left:485.04px;top:434.45px;font-size:10.8px;font-weight:400;color:#1C1C1C;transform:scaleX(1.0328);-webkit-text-stroke:0.4px #1C1C1C;">00:00</div>
<div class="t" style="left:592.34px;top:428.45px;font-size:10.8px;font-weight:400;color:#1C1C1C;transform:scaleX(1.0601);-webkit-text-stroke:0.4px #1C1C1C;">00000000</div>
<div class="t" style="left:703.31px;top:428.45px;font-size:10.8px;font-weight:400;color:#1C1C1C;transform:scaleX(1.0514);-webkit-text-stroke:0.4px #1C1C1C;">Nome cliente</div>
<div class="t" style="left:812.59px;top:428.45px;font-size:10.8px;font-weight:400;color:#1C1C1C;transform:scaleX(1.0327);-webkit-text-stroke:0.4px #1C1C1C;">Transportadora A</div>
<div class="t" style="left:968.54px;top:428.45px;font-size:10.8px;font-weight:400;color:#1C1C1C;transform:scaleX(0.9916);-webkit-text-stroke:0.4px #1C1C1C;">05</div>
<div class="t" style="left:1076.60px;top:428.45px;font-size:10.8px;font-weight:400;color:#1C1C1C;transform:scaleX(0.9876);-webkit-text-stroke:0.4px #1C1C1C;">100 kg</div>
<div class="t" style="left:1206.14px;top:428.45px;font-size:10.8px;font-weight:400;color:#1C1C1C;transform:scaleX(0.9916);-webkit-text-stroke:0.4px #1C1C1C;">05</div>
<div class="t" style="left:1314.40px;top:428.45px;font-size:10.8px;font-weight:400;color:#1C1C1C;transform:scaleX(0.9939);-webkit-text-stroke:0.4px #1C1C1C;">100 kg</div>
<div class="r" style="left:1402.3px;top:416.95px;width:94.7px;height:23.2px;background:#F8CE78;border-radius:8px;"></div>
<div class="t" style="left:1408.72px;top:429.25px;font-size:13.5px;font-weight:400;color:#111;transform:scaleX(1.1163);-webkit-text-stroke:0.35px #111;">Aguardando</div>
<div class="r" style="left:325px;top:457.1px;width:1180px;height:39.3px;background:#E3EBE7;border-radius:8px;box-shadow:0 2px 5px rgba(0,0,0,0.15);"></div>
<div class="t" style="left:354.23px;top:476.30px;font-size:10.8px;font-weight:400;color:#1C1C1C;transform:scaleX(1.0084);-webkit-text-stroke:0.4px #1C1C1C;">Sequencia</div>
<div class="t" style="left:476.64px;top:470.20px;font-size:10.8px;font-weight:400;color:#1C1C1C;transform:scaleX(1.0615);-webkit-text-stroke:0.4px #1C1C1C;">00/00/00</div>
<div class="t" style="left:485.04px;top:482.30px;font-size:10.8px;font-weight:400;color:#1C1C1C;transform:scaleX(1.0328);-webkit-text-stroke:0.4px #1C1C1C;">00:00</div>
<div class="t" style="left:592.34px;top:476.30px;font-size:10.8px;font-weight:400;color:#1C1C1C;transform:scaleX(1.0601);-webkit-text-stroke:0.4px #1C1C1C;">00000000</div>
<div class="t" style="left:703.31px;top:476.30px;font-size:10.8px;font-weight:400;color:#1C1C1C;transform:scaleX(1.0514);-webkit-text-stroke:0.4px #1C1C1C;">Nome cliente</div>
<div class="t" style="left:812.59px;top:476.30px;font-size:10.8px;font-weight:400;color:#1C1C1C;transform:scaleX(1.0327);-webkit-text-stroke:0.4px #1C1C1C;">Transportadora A</div>
<div class="t" style="left:968.54px;top:476.30px;font-size:10.8px;font-weight:400;color:#1C1C1C;transform:scaleX(0.9916);-webkit-text-stroke:0.4px #1C1C1C;">05</div>
<div class="t" style="left:1076.60px;top:476.30px;font-size:10.8px;font-weight:400;color:#1C1C1C;transform:scaleX(0.9876);-webkit-text-stroke:0.4px #1C1C1C;">100 kg</div>
<div class="t" style="left:1206.14px;top:476.30px;font-size:10.8px;font-weight:400;color:#1C1C1C;transform:scaleX(0.9916);-webkit-text-stroke:0.4px #1C1C1C;">05</div>
<div class="t" style="left:1314.40px;top:476.30px;font-size:10.8px;font-weight:400;color:#1C1C1C;transform:scaleX(0.9939);-webkit-text-stroke:0.4px #1C1C1C;">100 kg</div>
<div class="r" style="left:1402.3px;top:464.8px;width:94.7px;height:23.2px;background:#C8E3D5;border-radius:8px;"></div>
<div class="t" style="left:1420.48px;top:477.10px;font-size:13.5px;font-weight:400;color:#111;transform:scaleX(1.1007);-webkit-text-stroke:0.35px #111;">Liberado</div>
<div class="r" style="left:325px;top:504.95px;width:1180px;height:39.3px;background:#E3EBE7;border-radius:8px;box-shadow:0 2px 5px rgba(0,0,0,0.15);"></div>
<div class="t" style="left:354.23px;top:524.15px;font-size:10.8px;font-weight:400;color:#1C1C1C;transform:scaleX(1.0084);-webkit-text-stroke:0.4px #1C1C1C;">Sequencia</div>
<div class="t" style="left:476.64px;top:518.05px;font-size:10.8px;font-weight:400;color:#1C1C1C;transform:scaleX(1.0615);-webkit-text-stroke:0.4px #1C1C1C;">00/00/00</div>
<div class="t" style="left:485.04px;top:530.15px;font-size:10.8px;font-weight:400;color:#1C1C1C;transform:scaleX(1.0328);-webkit-text-stroke:0.4px #1C1C1C;">00:00</div>
<div class="t" style="left:592.34px;top:524.15px;font-size:10.8px;font-weight:400;color:#1C1C1C;transform:scaleX(1.0601);-webkit-text-stroke:0.4px #1C1C1C;">00000000</div>
<div class="t" style="left:703.31px;top:524.15px;font-size:10.8px;font-weight:400;color:#1C1C1C;transform:scaleX(1.0514);-webkit-text-stroke:0.4px #1C1C1C;">Nome cliente</div>
<div class="t" style="left:812.59px;top:524.15px;font-size:10.8px;font-weight:400;color:#1C1C1C;transform:scaleX(1.0327);-webkit-text-stroke:0.4px #1C1C1C;">Transportadora A</div>
<div class="t" style="left:968.54px;top:524.15px;font-size:10.8px;font-weight:400;color:#1C1C1C;transform:scaleX(0.9916);-webkit-text-stroke:0.4px #1C1C1C;">05</div>
<div class="t" style="left:1076.60px;top:524.15px;font-size:10.8px;font-weight:400;color:#1C1C1C;transform:scaleX(0.9876);-webkit-text-stroke:0.4px #1C1C1C;">100 kg</div>
<div class="t" style="left:1206.14px;top:524.15px;font-size:10.8px;font-weight:400;color:#1C1C1C;transform:scaleX(0.9916);-webkit-text-stroke:0.4px #1C1C1C;">05</div>
<div class="t" style="left:1314.40px;top:524.15px;font-size:10.8px;font-weight:400;color:#1C1C1C;transform:scaleX(0.9939);-webkit-text-stroke:0.4px #1C1C1C;">100 kg</div>
<div class="r" style="left:1402.3px;top:512.65px;width:94.7px;height:23.2px;background:#C8E3D5;border-radius:8px;"></div>
<div class="t" style="left:1420.48px;top:524.95px;font-size:13.5px;font-weight:400;color:#111;transform:scaleX(1.1007);-webkit-text-stroke:0.35px #111;">Liberado</div>
<div class="r" style="left:325px;top:552.8px;width:1180px;height:39.3px;background:#E3EBE7;border-radius:8px;box-shadow:0 2px 5px rgba(0,0,0,0.15);"></div>
<div class="t" style="left:354.23px;top:572.00px;font-size:10.8px;font-weight:400;color:#1C1C1C;transform:scaleX(1.0084);-webkit-text-stroke:0.4px #1C1C1C;">Sequencia</div>
<div class="t" style="left:476.64px;top:565.90px;font-size:10.8px;font-weight:400;color:#1C1C1C;transform:scaleX(1.0615);-webkit-text-stroke:0.4px #1C1C1C;">00/00/00</div>
<div class="t" style="left:485.04px;top:578.00px;font-size:10.8px;font-weight:400;color:#1C1C1C;transform:scaleX(1.0328);-webkit-text-stroke:0.4px #1C1C1C;">00:00</div>
<div class="t" style="left:592.34px;top:572.00px;font-size:10.8px;font-weight:400;color:#1C1C1C;transform:scaleX(1.0601);-webkit-text-stroke:0.4px #1C1C1C;">00000000</div>
<div class="t" style="left:703.31px;top:572.00px;font-size:10.8px;font-weight:400;color:#1C1C1C;transform:scaleX(1.0514);-webkit-text-stroke:0.4px #1C1C1C;">Nome cliente</div>
<div class="t" style="left:812.59px;top:572.00px;font-size:10.8px;font-weight:400;color:#1C1C1C;transform:scaleX(1.0327);-webkit-text-stroke:0.4px #1C1C1C;">Transportadora A</div>
<div class="t" style="left:968.54px;top:572.00px;font-size:10.8px;font-weight:400;color:#1C1C1C;transform:scaleX(0.9916);-webkit-text-stroke:0.4px #1C1C1C;">05</div>
<div class="t" style="left:1076.60px;top:572.00px;font-size:10.8px;font-weight:400;color:#1C1C1C;transform:scaleX(0.9876);-webkit-text-stroke:0.4px #1C1C1C;">100 kg</div>
<div class="t" style="left:1206.14px;top:572.00px;font-size:10.8px;font-weight:400;color:#1C1C1C;transform:scaleX(0.9916);-webkit-text-stroke:0.4px #1C1C1C;">05</div>
<div class="t" style="left:1314.40px;top:572.00px;font-size:10.8px;font-weight:400;color:#1C1C1C;transform:scaleX(0.9939);-webkit-text-stroke:0.4px #1C1C1C;">100 kg</div>
<div class="r" style="left:1402.3px;top:560.5px;width:94.7px;height:23.2px;background:#C8E3D5;border-radius:8px;"></div>
<div class="t" style="left:1420.48px;top:572.80px;font-size:13.5px;font-weight:400;color:#111;transform:scaleX(1.1007);-webkit-text-stroke:0.35px #111;">Liberado</div>
<div class="r" style="left:325px;top:600.65px;width:1180px;height:39.3px;background:#F5E3C1;border-radius:8px;box-shadow:0 2px 5px rgba(0,0,0,0.15);"></div>
<div class="t" style="left:354.23px;top:619.85px;font-size:10.8px;font-weight:400;color:#1C1C1C;transform:scaleX(1.0084);-webkit-text-stroke:0.4px #1C1C1C;">Sequencia</div>
<div class="t" style="left:476.64px;top:613.75px;font-size:10.8px;font-weight:400;color:#1C1C1C;transform:scaleX(1.0615);-webkit-text-stroke:0.4px #1C1C1C;">00/00/00</div>
<div class="t" style="left:485.04px;top:625.85px;font-size:10.8px;font-weight:400;color:#1C1C1C;transform:scaleX(1.0328);-webkit-text-stroke:0.4px #1C1C1C;">00:00</div>
<div class="t" style="left:592.34px;top:619.85px;font-size:10.8px;font-weight:400;color:#1C1C1C;transform:scaleX(1.0601);-webkit-text-stroke:0.4px #1C1C1C;">00000000</div>
<div class="t" style="left:703.31px;top:619.85px;font-size:10.8px;font-weight:400;color:#1C1C1C;transform:scaleX(1.0514);-webkit-text-stroke:0.4px #1C1C1C;">Nome cliente</div>
<div class="t" style="left:812.59px;top:619.85px;font-size:10.8px;font-weight:400;color:#1C1C1C;transform:scaleX(1.0327);-webkit-text-stroke:0.4px #1C1C1C;">Transportadora A</div>
<div class="t" style="left:968.54px;top:619.85px;font-size:10.8px;font-weight:400;color:#1C1C1C;transform:scaleX(0.9916);-webkit-text-stroke:0.4px #1C1C1C;">05</div>
<div class="t" style="left:1076.60px;top:619.85px;font-size:10.8px;font-weight:400;color:#1C1C1C;transform:scaleX(0.9876);-webkit-text-stroke:0.4px #1C1C1C;">100 kg</div>
<div class="t" style="left:1206.14px;top:619.85px;font-size:10.8px;font-weight:400;color:#1C1C1C;transform:scaleX(0.9916);-webkit-text-stroke:0.4px #1C1C1C;">05</div>
<div class="t" style="left:1314.40px;top:619.85px;font-size:10.8px;font-weight:400;color:#1C1C1C;transform:scaleX(0.9939);-webkit-text-stroke:0.4px #1C1C1C;">100 kg</div>
<div class="r" style="left:1402.3px;top:608.35px;width:94.7px;height:23.2px;background:#F8CE78;border-radius:8px;"></div>
<div class="t" style="left:1408.72px;top:620.65px;font-size:13.5px;font-weight:400;color:#111;transform:scaleX(1.1163);-webkit-text-stroke:0.35px #111;">Aguardando</div>
<div class="r" style="left:325px;top:648.5px;width:1180px;height:39.3px;background:#E3EBE7;border-radius:8px;box-shadow:0 2px 5px rgba(0,0,0,0.15);"></div>
<div class="t" style="left:354.23px;top:667.70px;font-size:10.8px;font-weight:400;color:#1C1C1C;transform:scaleX(1.0084);-webkit-text-stroke:0.4px #1C1C1C;">Sequencia</div>
<div class="t" style="left:476.64px;top:661.60px;font-size:10.8px;font-weight:400;color:#1C1C1C;transform:scaleX(1.0615);-webkit-text-stroke:0.4px #1C1C1C;">00/00/00</div>
<div class="t" style="left:485.04px;top:673.70px;font-size:10.8px;font-weight:400;color:#1C1C1C;transform:scaleX(1.0328);-webkit-text-stroke:0.4px #1C1C1C;">00:00</div>
<div class="t" style="left:592.34px;top:667.70px;font-size:10.8px;font-weight:400;color:#1C1C1C;transform:scaleX(1.0601);-webkit-text-stroke:0.4px #1C1C1C;">00000000</div>
<div class="t" style="left:703.31px;top:667.70px;font-size:10.8px;font-weight:400;color:#1C1C1C;transform:scaleX(1.0514);-webkit-text-stroke:0.4px #1C1C1C;">Nome cliente</div>
<div class="t" style="left:812.59px;top:667.70px;font-size:10.8px;font-weight:400;color:#1C1C1C;transform:scaleX(1.0327);-webkit-text-stroke:0.4px #1C1C1C;">Transportadora A</div>
<div class="t" style="left:968.54px;top:667.70px;font-size:10.8px;font-weight:400;color:#1C1C1C;transform:scaleX(0.9916);-webkit-text-stroke:0.4px #1C1C1C;">05</div>
<div class="t" style="left:1076.60px;top:667.70px;font-size:10.8px;font-weight:400;color:#1C1C1C;transform:scaleX(0.9876);-webkit-text-stroke:0.4px #1C1C1C;">100 kg</div>
<div class="t" style="left:1206.14px;top:667.70px;font-size:10.8px;font-weight:400;color:#1C1C1C;transform:scaleX(0.9916);-webkit-text-stroke:0.4px #1C1C1C;">05</div>
<div class="t" style="left:1314.40px;top:667.70px;font-size:10.8px;font-weight:400;color:#1C1C1C;transform:scaleX(0.9939);-webkit-text-stroke:0.4px #1C1C1C;">100 kg</div>
<div class="r" style="left:1402.3px;top:656.2px;width:94.7px;height:23.2px;background:#C8E3D5;border-radius:8px;"></div>
<div class="t" style="left:1420.48px;top:668.50px;font-size:13.5px;font-weight:400;color:#111;transform:scaleX(1.1007);-webkit-text-stroke:0.35px #111;">Liberado</div>
<div class="r" style="left:325px;top:696.35px;width:1180px;height:39.3px;background:#F5E3C1;border-radius:8px;box-shadow:0 2px 5px rgba(0,0,0,0.15);"></div>
<div class="t" style="left:354.23px;top:715.55px;font-size:10.8px;font-weight:400;color:#1C1C1C;transform:scaleX(1.0084);-webkit-text-stroke:0.4px #1C1C1C;">Sequencia</div>
<div class="t" style="left:476.64px;top:709.45px;font-size:10.8px;font-weight:400;color:#1C1C1C;transform:scaleX(1.0615);-webkit-text-stroke:0.4px #1C1C1C;">00/00/00</div>
<div class="t" style="left:485.04px;top:721.55px;font-size:10.8px;font-weight:400;color:#1C1C1C;transform:scaleX(1.0328);-webkit-text-stroke:0.4px #1C1C1C;">00:00</div>
<div class="t" style="left:592.34px;top:715.55px;font-size:10.8px;font-weight:400;color:#1C1C1C;transform:scaleX(1.0601);-webkit-text-stroke:0.4px #1C1C1C;">00000000</div>
<div class="t" style="left:703.31px;top:715.55px;font-size:10.8px;font-weight:400;color:#1C1C1C;transform:scaleX(1.0514);-webkit-text-stroke:0.4px #1C1C1C;">Nome cliente</div>
<div class="t" style="left:812.59px;top:715.55px;font-size:10.8px;font-weight:400;color:#1C1C1C;transform:scaleX(1.0327);-webkit-text-stroke:0.4px #1C1C1C;">Transportadora A</div>
<div class="t" style="left:968.54px;top:715.55px;font-size:10.8px;font-weight:400;color:#1C1C1C;transform:scaleX(0.9916);-webkit-text-stroke:0.4px #1C1C1C;">05</div>
<div class="t" style="left:1076.60px;top:715.55px;font-size:10.8px;font-weight:400;color:#1C1C1C;transform:scaleX(0.9876);-webkit-text-stroke:0.4px #1C1C1C;">100 kg</div>
<div class="t" style="left:1206.14px;top:715.55px;font-size:10.8px;font-weight:400;color:#1C1C1C;transform:scaleX(0.9916);-webkit-text-stroke:0.4px #1C1C1C;">05</div>
<div class="t" style="left:1314.40px;top:715.55px;font-size:10.8px;font-weight:400;color:#1C1C1C;transform:scaleX(0.9939);-webkit-text-stroke:0.4px #1C1C1C;">100 kg</div>
<div class="r" style="left:1402.3px;top:704.05px;width:94.7px;height:23.2px;background:#F8CE78;border-radius:8px;"></div>
<div class="t" style="left:1408.72px;top:716.35px;font-size:13.5px;font-weight:400;color:#111;transform:scaleX(1.1163);-webkit-text-stroke:0.35px #111;">Aguardando</div>
<div class="r" style="left:325px;top:744.2px;width:1180px;height:39.3px;background:#E3EBE7;border-radius:8px;box-shadow:0 2px 5px rgba(0,0,0,0.15);"></div>
<div class="t" style="left:354.23px;top:763.40px;font-size:10.8px;font-weight:400;color:#1C1C1C;transform:scaleX(1.0084);-webkit-text-stroke:0.4px #1C1C1C;">Sequencia</div>
<div class="t" style="left:476.64px;top:757.30px;font-size:10.8px;font-weight:400;color:#1C1C1C;transform:scaleX(1.0615);-webkit-text-stroke:0.4px #1C1C1C;">00/00/00</div>
<div class="t" style="left:485.04px;top:769.40px;font-size:10.8px;font-weight:400;color:#1C1C1C;transform:scaleX(1.0328);-webkit-text-stroke:0.4px #1C1C1C;">00:00</div>
<div class="t" style="left:592.34px;top:763.40px;font-size:10.8px;font-weight:400;color:#1C1C1C;transform:scaleX(1.0601);-webkit-text-stroke:0.4px #1C1C1C;">00000000</div>
<div class="t" style="left:703.31px;top:763.40px;font-size:10.8px;font-weight:400;color:#1C1C1C;transform:scaleX(1.0514);-webkit-text-stroke:0.4px #1C1C1C;">Nome cliente</div>
<div class="t" style="left:812.59px;top:763.40px;font-size:10.8px;font-weight:400;color:#1C1C1C;transform:scaleX(1.0327);-webkit-text-stroke:0.4px #1C1C1C;">Transportadora A</div>
<div class="t" style="left:968.54px;top:763.40px;font-size:10.8px;font-weight:400;color:#1C1C1C;transform:scaleX(0.9916);-webkit-text-stroke:0.4px #1C1C1C;">05</div>
<div class="t" style="left:1076.60px;top:763.40px;font-size:10.8px;font-weight:400;color:#1C1C1C;transform:scaleX(0.9876);-webkit-text-stroke:0.4px #1C1C1C;">100 kg</div>
<div class="t" style="left:1206.14px;top:763.40px;font-size:10.8px;font-weight:400;color:#1C1C1C;transform:scaleX(0.9916);-webkit-text-stroke:0.4px #1C1C1C;">05</div>
<div class="t" style="left:1314.40px;top:763.40px;font-size:10.8px;font-weight:400;color:#1C1C1C;transform:scaleX(0.9939);-webkit-text-stroke:0.4px #1C1C1C;">100 kg</div>
<div class="r" style="left:1402.3px;top:751.9px;width:94.7px;height:23.2px;background:#C8E3D5;border-radius:8px;"></div>
<div class="t" style="left:1420.48px;top:764.20px;font-size:13.5px;font-weight:400;color:#111;transform:scaleX(1.1007);-webkit-text-stroke:0.35px #111;">Liberado</div>
<div class="r" style="left:1221px;top:667px;width:276px;height:140px;background:#fff;border-radius:9px;box-shadow:0 0 2px rgba(0,0,0,0.05);"></div>
<div class="r" style="left:1225px;top:671px;width:268px;height:35px;background:#BD8B08;border-radius:9px;"></div>
<div class="r" style="left:1361px;top:678.5px;width:1px;height:19.5px;background:#D4AE55;"></div>
<div class="r" style="left:1423px;top:678.5px;width:1px;height:19.5px;background:#D4AE55;"></div>
<div class="t" style="left:1233.26px;top:688.40px;font-size:14.2px;font-weight:700;color:#fff;transform:scaleX(0.9852);">Transportadora</div>
<div class="t" style="left:1370.65px;top:688.40px;font-size:14.2px;font-weight:700;color:#fff;transform:scaleX(0.9678);">Peso</div>
<div class="t" style="left:1433.64px;top:688.40px;font-size:14.2px;font-weight:700;color:#fff;transform:scaleX(1.0107);">Volume</div>
<div class="t" style="left:1233.23px;top:733.00px;font-size:13.2px;font-weight:400;color:#888888;transform:scaleX(1.0944);">Transportadora A</div>
<div class="t" style="left:1372.07px;top:733.00px;font-size:13.2px;font-weight:400;color:#888888;transform:scaleX(1.0223);">120 kg</div>
<div class="t" style="left:1452.35px;top:733.00px;font-size:13.2px;font-weight:400;color:#888888;">10</div>
<div class="t" style="left:1233.23px;top:756.10px;font-size:13.2px;font-weight:400;color:#888888;transform:scaleX(1.0974);">Transportadora B</div>
<div class="t" style="left:1372.07px;top:756.10px;font-size:13.2px;font-weight:400;color:#888888;transform:scaleX(1.0223);">120 kg</div>
<div class="t" style="left:1452.35px;top:756.10px;font-size:13.2px;font-weight:400;color:#888888;">10</div>
<div class="t" style="left:1233.23px;top:779.20px;font-size:13.2px;font-weight:400;color:#888888;transform:scaleX(1.0895);">Transportadora C</div>
<div class="t" style="left:1372.07px;top:779.20px;font-size:13.2px;font-weight:400;color:#888888;transform:scaleX(1.0223);">120 kg</div>
<div class="t" style="left:1452.35px;top:779.20px;font-size:13.2px;font-weight:400;color:#888888;">10</div>
</body></html>
